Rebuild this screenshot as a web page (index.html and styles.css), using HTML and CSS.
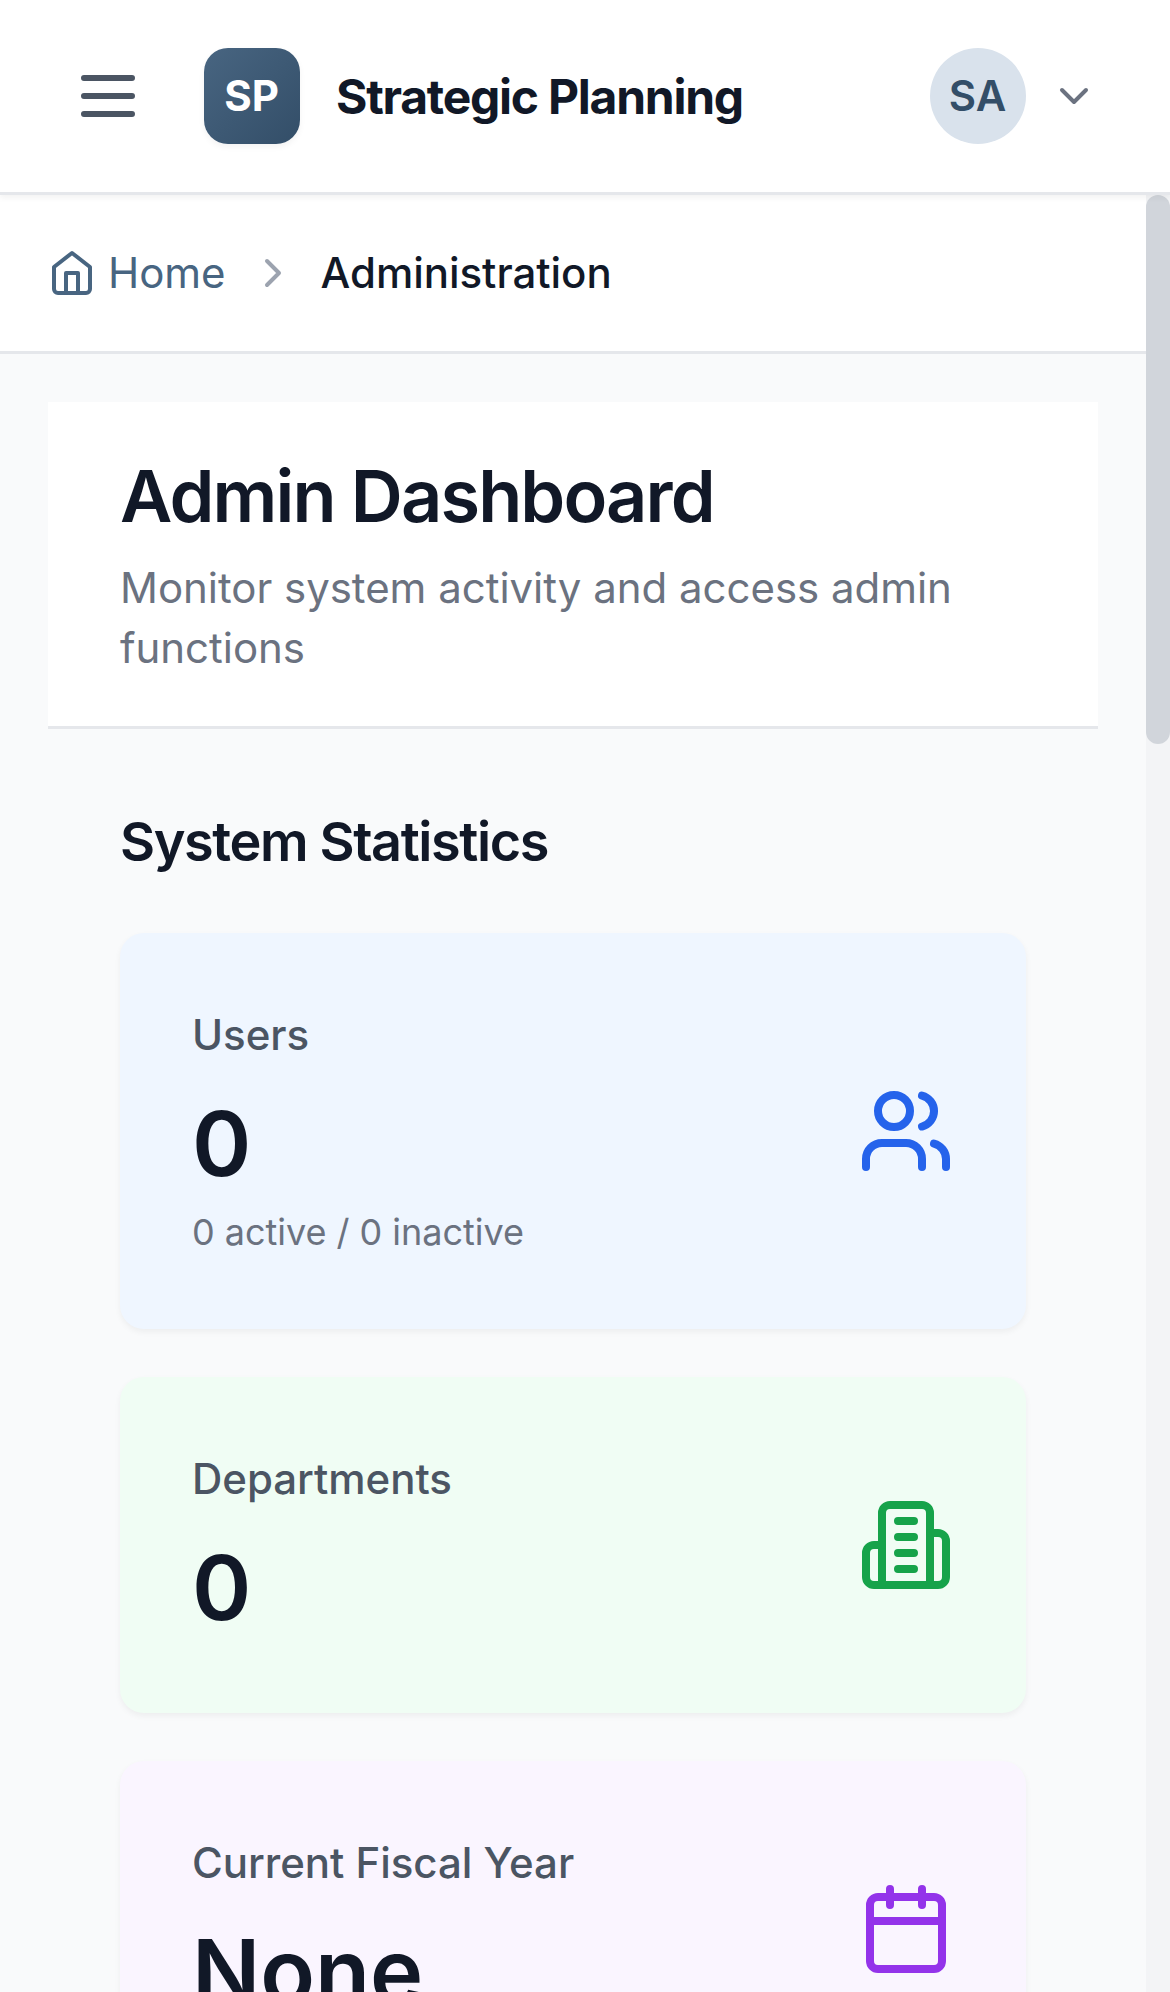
FILE: index.html
```html
<!DOCTYPE html>
<html lang="en">
<head>
<meta charset="utf-8">
<title>Strategic Planning</title>
<link rel="stylesheet" href="styles.css">
</head>
<body>
<div class="app">
  <header class="topbar">
    <div class="topbar-left">
      <svg class="icon icon-menu" viewBox="0 0 24 24"><path d="M4 6h16M4 12h16M4 18h16"/></svg>
      <div class="brand">
        <div class="brand-mark">SP</div>
        <span class="brand-name">Strategic Planning</span>
      </div>
    </div>
    <div class="account">
      <div class="avatar">SA</div>
      <svg class="icon icon-chevron-down" viewBox="0 0 24 24"><path d="m6 9 6 6 6-6"/></svg>
    </div>
  </header>
  <div class="viewport">
    <main class="content">
      <nav class="breadcrumb">
        <a class="crumb-home">
          <svg class="icon icon-small" viewBox="0 0 24 24"><path d="m3 9 9-7 9 7v11a2 2 0 0 1-2 2H5a2 2 0 0 1-2-2z"/><path d="M9 22V12h6v10"/></svg>
          <span>Home</span>
        </a>
        <svg class="icon icon-small crumb-sep" viewBox="0 0 24 24"><path d="m9 18 6-6-6-6"/></svg>
        <span class="crumb-current">Administration</span>
      </nav>
      <div class="page">
        <section class="page-header">
          <h1 class="page-title">Admin Dashboard</h1>
          <p class="page-subtitle">Monitor system activity and access admin functions</p>
        </section>
        <section class="stats">
          <h2 class="section-title">System Statistics</h2>
          <div class="cards">
            <article class="card card-blue">
              <div class="card-body">
                <p class="card-label">Users</p>
                <p class="card-value">0</p>
                <p class="card-note">0 active / 0 inactive</p>
              </div>
              <svg class="icon icon-large" viewBox="0 0 24 24"><path d="M16 21v-2a4 4 0 0 0-4-4H6a4 4 0 0 0-4 4v2"/><circle cx="9" cy="7" r="4"/><path d="M22 21v-2a4 4 0 0 0-3-3.87"/><path d="M16 3.13a4 4 0 0 1 0 7.75"/></svg>
            </article>
            <article class="card card-green">
              <div class="card-body">
                <p class="card-label">Departments</p>
                <p class="card-value">0</p>
              </div>
              <svg class="icon icon-large" viewBox="0 0 24 24"><path d="M6 22V4a2 2 0 0 1 2-2h8a2 2 0 0 1 2 2v18Z"/><path d="M6 12H4a2 2 0 0 0-2 2v6a2 2 0 0 0 2 2h2"/><path d="M18 9h2a2 2 0 0 1 2 2v9a2 2 0 0 1-2 2h-2"/><path d="M10 6h4M10 10h4M10 14h4M10 18h4"/></svg>
            </article>
            <article class="card card-purple">
              <div class="card-body">
                <p class="card-label">Current Fiscal Year</p>
                <p class="card-value">None</p>
              </div>
              <svg class="icon icon-large" viewBox="0 0 24 24"><rect x="3" y="4" width="18" height="18" rx="2"/><path d="M16 2v4M8 2v4M3 10h18"/></svg>
            </article>
          </div>
        </section>
      </div>
    </main>
    <div class="scrollbar"><div class="scrollbar-thumb"></div></div>
  </div>
</div>
</body>
</html>
```

FILE: styles.css
```css
* { box-sizing: border-box; }

body, h1, h2, p { margin: 0; }

body {
  font-family: Inter, "Liberation Sans", sans-serif;
  font-size: 42px;
  line-height: 60px;
  letter-spacing: -0.03px;
  color: #111827;
  background: #f9fafb;
}

.app {
  display: flex;
  flex-direction: column;
  height: 1992px;
  overflow: hidden;
}

.icon {
  display: block;
  flex: none;
  fill: none;
  stroke: currentColor;
  stroke-width: 2;
  stroke-linecap: round;
  stroke-linejoin: round;
}

.icon-small, .icon-chevron-down { width: 48px; height: 48px; }
.icon-menu { width: 72px; height: 72px; color: #4b5563; }
.icon-large { width: 96px; height: 96px; }
.icon-chevron-down { color: #6b7280; }

.topbar {
  position: relative;
  z-index: 1;
  flex: none;
  display: flex;
  align-items: center;
  justify-content: space-between;
  height: 195px;
  padding: 0 72px;
  background: #fff;
  border-bottom: 3px solid #e5e7eb;
  box-shadow: 0 3px 6px rgba(0, 0, 0, 0.05);
}

.topbar-left { display: flex; align-items: center; gap: 60px; }
.brand { display: flex; align-items: center; gap: 36px; }

.brand-mark, .avatar {
  display: flex;
  align-items: center;
  justify-content: center;
  width: 96px;
  height: 96px;
  padding-right: 1px;
}

.brand-mark {
  border-radius: 24px;
  background: linear-gradient(135deg, #486581, #334e68);
  box-shadow: 0 3px 6px rgba(0, 0, 0, 0.05);
  color: #fff;
  font-weight: 700;
}

.brand-name {
  padding-top: 2px;
  font-size: 48px;
  font-weight: 700;
  letter-spacing: -0.026em;
}

.account { display: flex; align-items: center; gap: 24px; }

.avatar {
  border-radius: 50%;
  background: #d9e2ec;
  color: #334e68;
  font-weight: 600;
}

.viewport { display: flex; flex: 1; min-height: 0; }
.content { flex: 1; min-width: 0; overflow: hidden; }

.breadcrumb {
  display: flex;
  align-items: center;
  gap: 24px;
  height: 159px;
  padding: 0 48px;
  background: #fff;
  border-bottom: 3px solid #e5e7eb;
}

.crumb-home { display: flex; align-items: center; gap: 12px; color: #486581; }
.crumb-sep { margin-left: -1px; color: #9ca3af; }
.crumb-current { font-weight: 500; }

.page { padding: 48px; }

.page-header {
  padding: 48px 72px;
  background: #fff;
  border-bottom: 3px solid #e5e7eb;
}

.page-title {
  margin-bottom: 16px;
  font-size: 72px;
  line-height: 92px;
  font-weight: 600;
  letter-spacing: -0.026em;
}

.page-subtitle { color: #6b7280; }

.stats { padding: 72px; }

.section-title {
  margin-bottom: 51px;
  font-size: 54px;
  line-height: 81px;
  font-weight: 600;
  letter-spacing: -0.026em;
}

.cards { display: flex; flex-direction: column; gap: 48px; }

.card {
  display: flex;
  align-items: center;
  justify-content: space-between;
  padding: 72px;
  border-radius: 24px;
  box-shadow: 0 3px 6px rgba(0, 0, 0, 0.05);
}

.card-blue { background: #eff6ff; }
.card-green { background: #f0fdf4; }
.card-purple { background: #faf5ff; }
.card-blue .icon { color: #2563eb; }
.card-green .icon { color: #16a34a; }
.card-purple .icon { color: #9333ea; }

.card-label { font-weight: 500; color: #4b5563; }

.card-value {
  margin-top: 25px;
  font-size: 90px;
  line-height: 107px;
  font-weight: 600;
}

.card-note {
  margin-top: 12px;
  padding-bottom: 2px;
  font-size: 36px;
  line-height: 46px;
  color: #6b7280;
}

.scrollbar { flex: none; width: 24px; background: #f3f4f6; }
.scrollbar-thumb { height: 549px; border-radius: 12px; background: #d1d5db; }
```
